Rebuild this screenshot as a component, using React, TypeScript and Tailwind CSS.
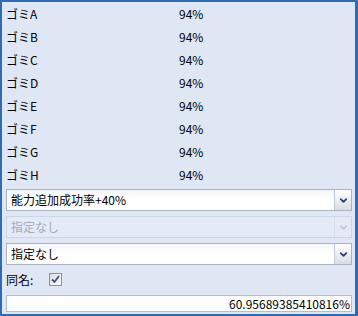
import { ChevronDown } from "lucide-react";

const rows = ["A", "B", "C", "D", "E", "F", "G", "H"];

function Select({ value, disabled }: { value: string; disabled?: boolean }) {
  return (
    <div
      className={
        "ml-[4px] w-[346px] h-[22px] flex border " +
        (disabled
          ? "border-[#cdd6e6] bg-[#e4ebf7]"
          : "border-[#a9b3c4] bg-gradient-to-b from-[#f4f6f9] via-white to-white")
      }
    >
      <div
        className={
          "flex-1 flex items-center pl-[4px] text-[12px] " +
          (disabled ? "text-[#a3abba]" : "text-black")
        }
      >
        {value}
      </div>
      <div
        className={
          "w-[17px] flex items-center justify-center border-l " +
          (disabled
            ? "border-[#d6deeb] bg-[#e4ebf7]"
            : "border-[#c2c9d4] bg-gradient-to-b from-white to-[#d9dde4]")
        }
      >
        <ChevronDown
          className={"w-[11px] h-[11px] " + (disabled ? "text-[#c3cad6]" : "text-[#2c3f78]")}
          strokeWidth={4}
        />
      </div>
    </div>
  );
}

export default function App() {
  return (
    <div
      className="w-[358px] h-[316px] bg-[#dfe7f5] border-l-2 border-t-2 border-r-[3px] border-b-2 border-[#2f6cb7] flex flex-col"
      style={{ fontFamily: '"Noto Sans CJK JP", "Noto Sans", sans-serif' }}
    >
      {rows.map((r) => (
        <div key={r} className="h-[23px] flex items-center text-[12px] text-black">
          <span className="w-[177px] pl-[4px]">ゴミ{r}</span>
          <span>94%</span>
        </div>
      ))}

      <div className="mt-[3px] flex flex-col gap-[5px]">
        <Select value="能力追加成功率+40%" />
        <Select value="指定なし" disabled />
        <Select value="指定なし" />
      </div>

      <div className="mt-[8px] h-[13px] flex items-center text-[12px] text-black">
        <span className="w-[47px] pl-[4px]">同名:</span>
        <div className="w-[13px] h-[13px] border border-[#8e8f8f] bg-gradient-to-br from-[#dcdcdc] to-white flex items-center justify-center">
          <svg viewBox="0 0 9 9" className="w-[9px] h-[9px]">
            <path d="M1 4.5 L3.5 7 L8 1" fill="none" stroke="#3b4f91" strokeWidth="1.8" />
          </svg>
        </div>
      </div>

      <div className="mt-[9px] ml-[4px] w-[346px] h-[17px] border border-[#a7bfe9] bg-white flex items-center justify-end pr-[1px] text-[12px] text-black">
        60.95689385410816%
      </div>
    </div>
  );
}
